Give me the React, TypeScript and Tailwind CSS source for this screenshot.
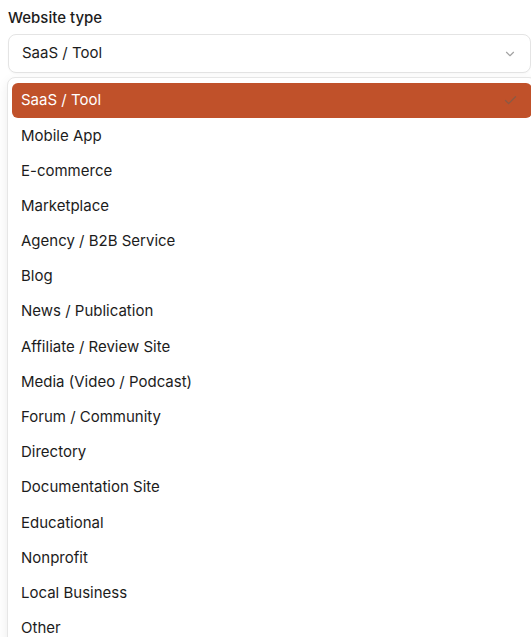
import React from "react";

const items = [
  "SaaS / Tool",
  "Mobile App",
  "E-commerce",
  "Marketplace",
  "Agency / B2B Service",
  "Blog",
  "News / Publication",
  "Affiliate / Review Site",
  "Media (Video / Podcast)",
  "Forum / Community",
  "Directory",
  "Documentation Site",
  "Educational",
  "Nonprofit",
  "Local Business",
  "Other",
];

export default function App() {
  return (
    <div
      className="relative h-[637px] w-[531px] overflow-hidden bg-white text-[#1c1c1c]"
      style={{ fontFamily: "Inter, 'Noto Sans', sans-serif" }}
    >
      <div className="pl-2 pt-2">
        <div className="text-[15px] font-medium leading-5">Website type</div>
        <div className="mt-1.5 flex h-[39px] w-[523px] items-center justify-between rounded-lg border border-[#e4e4e4] bg-white pl-[13px] pr-[13px] text-[15px] shadow-[0_1px_2px_rgba(0,0,0,0.03)]">
          <span>SaaS / Tool</span>
          <svg width="14" height="14" viewBox="0 0 24 24" fill="none" stroke="#a3a3a3" strokeWidth="2" strokeLinecap="round" strokeLinejoin="round">
            <path d="m6 9 6 6 6-6" />
          </svg>
        </div>
        {/* underlying page content (mostly covered) */}
        <div className="mt-[145px] h-[43px] border-t border-[#e6e6e6]" />
        <div className="h-[218px] border-t border-[#e6e6e6]" />
        <div className="h-[57px] border-t border-[#ececec]" />
        <div className="h-[100px] bg-[#f4f4f4]" />
      </div>

      <div className="absolute left-[7px] top-[77px] w-[530px] rounded-lg border border-[#e6e6e6] bg-white px-1 pb-1 pt-[5px] shadow-[0_4px_12px_rgba(0,0,0,0.08)]">
        {items.map((it, i) => (
          <div
            key={it}
            className={
              i === 0
                ? "flex h-[35.2px] items-center justify-between rounded-md bg-[#c0512a] pl-[9px] pr-[14px] text-[15px] text-white"
                : "flex h-[35.2px] items-center pl-[9px] text-[15px] text-[#1c1c1c]"
            }
          >
            <span>{it}</span>
            {i === 0 && (
              <svg width="15" height="15" viewBox="0 0 24 24" fill="none" stroke="#8a5a45" strokeWidth="2" strokeLinecap="round" strokeLinejoin="round">
                <path d="M20 6 9 17l-5-5" />
              </svg>
            )}
          </div>
        ))}
      </div>
    </div>
  );
}
